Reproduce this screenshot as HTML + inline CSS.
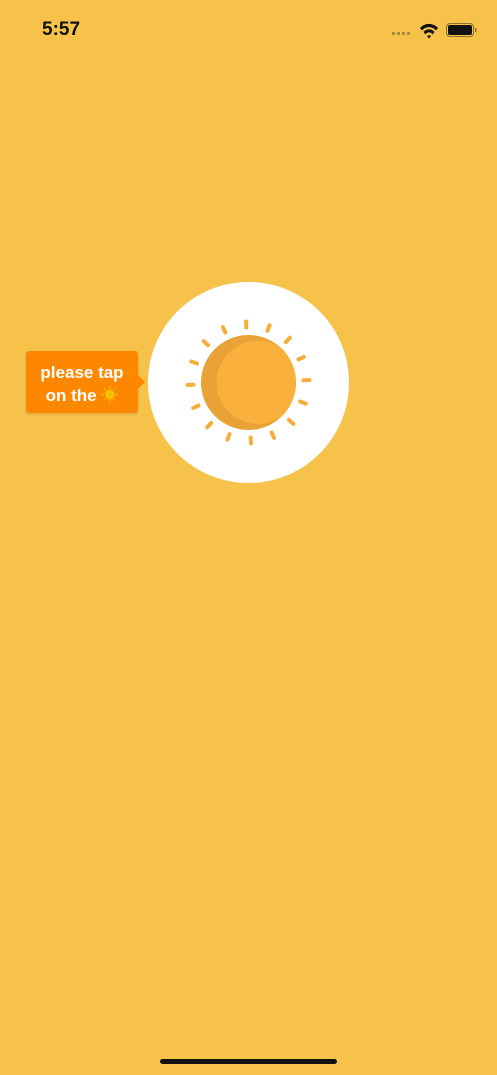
<!DOCTYPE html>
<html><head><meta charset="utf-8"><style>
html,body{margin:0;padding:0}
body{width:497px;height:1075px;background:#f6c24a;position:relative;overflow:hidden;font-family:"Liberation Sans",sans-serif}
.time{position:absolute;left:42px;top:19px;font-size:19px;font-weight:bold;color:#111}
.tip{position:absolute;left:26px;top:351px;width:112px;height:62px;background:#fe8700;border-radius:3px;color:#fff;font-weight:bold;font-size:17px;line-height:21px;text-align:center;box-sizing:border-box;padding-top:11px;box-shadow:0 1px 2px rgba(0,0,0,.15)}
.tip:after{content:"";position:absolute;right:-7px;top:24px;border-left:7px solid #fe8700;border-top:7px solid transparent;border-bottom:7px solid transparent}
.home{position:absolute;left:160px;top:1059px;width:177px;height:5px;border-radius:3px;background:#111}
</style></head><body>
<div class="time">5:57</div>
<svg style="position:absolute;left:390px;top:20px" width="90" height="22">
<g fill="#a98a3e"><rect x="2" y="12" width="3" height="3"/><rect x="7" y="12" width="3" height="3"/><rect x="12" y="12" width="3" height="3"/><rect x="17" y="12" width="3" height="3"/></g>
<path d="M30 8 A12 12 0 0 1 48 8 L46 10.5 A9 9 0 0 0 32 10.5 Z M33.5 12 A7 7 0 0 1 44.5 12 L42.5 14.5 A4 4 0 0 0 35.5 14.5Z M37 16 A3 3 0 0 1 41 16 L39 18.5Z" fill="#111"/>
<rect x="56.5" y="3.5" width="27" height="13" rx="3.5" fill="none" stroke="#8a6f2e" stroke-width="1"/>
<rect x="58" y="5" width="24" height="10" rx="2" fill="#111"/>
<rect x="85" y="8" width="1.5" height="4" fill="#8a6f2e"/>
</svg>
<svg style="position:absolute;left:0;top:0" width="497" height="1075">
<circle cx="248.5" cy="382.5" r="100.5" fill="#fff"/>
<g stroke="#f6ae3a" stroke-width="4" stroke-linecap="round" id="rays"></g>
<circle cx="248.5" cy="382.5" r="47.5" fill="#e9a235"/>
<clipPath id="c"><circle cx="248.5" cy="382.5" r="47.5"/></clipPath>
<circle cx="258" cy="382.5" r="41.5" fill="#f9b03d" clip-path="url(#c)"/>
</svg>
<script>
var g=document.getElementById('rays');
for(var i=0;i<16;i++){var a=i*Math.PI/8-Math.PI/2-0.04;var r1=55,r2=61;
var l=document.createElementNS('http://www.w3.org/2000/svg','line');
l.setAttribute('x1',248.5+r1*Math.cos(a));l.setAttribute('y1',382.5+r1*Math.sin(a));
l.setAttribute('x2',248.5+r2*Math.cos(a));l.setAttribute('y2',382.5+r2*Math.sin(a));g.appendChild(l);}
</script>
<div class="tip">please tap<br>on the <span style="font-family:'Noto Sans CJK JP',sans-serif;color:#f5c000">☀</span></div>
<div class="home"></div>
</body></html>
